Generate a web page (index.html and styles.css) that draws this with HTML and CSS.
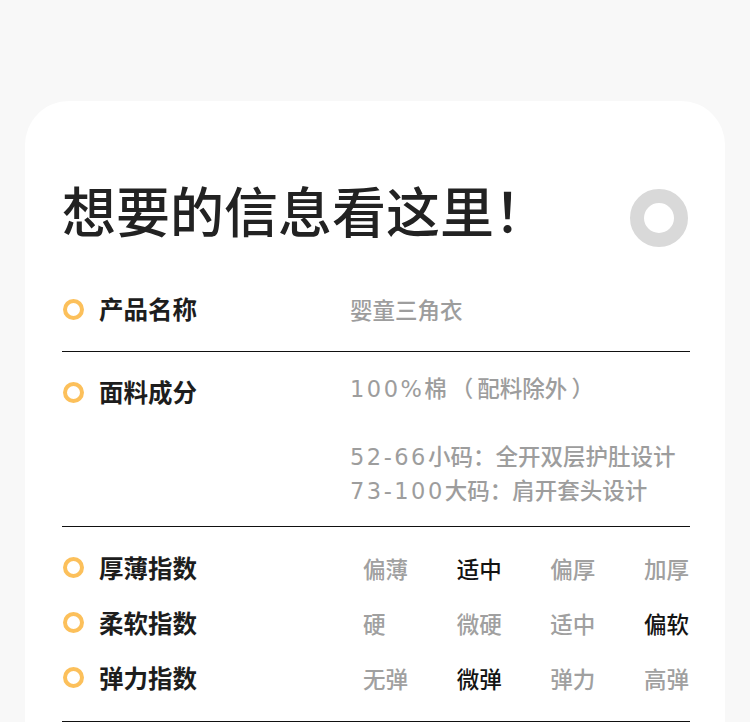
FILE: index.html
```html
<!DOCTYPE html>
<html lang="zh-CN">
<head>
<meta charset="utf-8">
<title>想要的信息看这里</title>
<link rel="stylesheet" href="styles.css">
</head>
<body>
<main class="page">
  <section class="card">
    <header class="card-head">
      <h1 class="title">想要的信息看这里！</h1>
      <span class="head-ring" aria-hidden="true"></span>
    </header>

    <div class="row row-first">
      <div class="label"><span class="dot"></span>产品名称</div>
      <div class="value">婴童三角衣</div>
    </div>

    <div class="row row-multi">
      <div class="label"><span class="dot"></span>面料成分</div>
      <div class="value">
        <p class="line"><span class="num">100%</span>棉<span class="paren">（</span>配料除外<span class="paren">）</span></p>
        <p class="line blank"></p>
        <p class="line"><span class="num">52-66</span>小码：全开双层护肚设计</p>
        <p class="line"><span class="num">73-100</span>大码：肩开套头设计</p>
      </div>
    </div>

    <div class="scales">
      <div class="scale-row">
        <div class="label"><span class="dot"></span>厚薄指数</div>
        <ul class="options">
          <li class="opt">偏薄</li>
          <li class="opt on">适中</li>
          <li class="opt">偏厚</li>
          <li class="opt">加厚</li>
        </ul>
      </div>
      <div class="scale-row">
        <div class="label"><span class="dot"></span>柔软指数</div>
        <ul class="options">
          <li class="opt">硬</li>
          <li class="opt">微硬</li>
          <li class="opt">适中</li>
          <li class="opt on">偏软</li>
        </ul>
      </div>
      <div class="scale-row">
        <div class="label"><span class="dot"></span>弹力指数</div>
        <ul class="options">
          <li class="opt">无弹</li>
          <li class="opt on">微弹</li>
          <li class="opt">弹力</li>
          <li class="opt">高弹</li>
        </ul>
      </div>
    </div>
  </section>
</main>
</body>
</html>
```

FILE: styles.css
```css
* {
  box-sizing: border-box;
}

html, body {
  margin: 0;
  padding: 0;
  background: #f8f8f8;
  font-family: "Noto Sans CJK SC", "Noto Sans", sans-serif;
  text-spacing-trim: space-all;
}

.page {
  padding: 101px 25px 0;
  height: 722px;
  overflow: hidden;
}

.card {
  background: #ffffff;
  border-radius: 44px 44px 0 0;
  padding: 77px 35px 0 37px;
  min-height: 700px;
}

.card-head {
  display: flex;
  align-items: flex-start;
  justify-content: space-between;
  height: 64px;
  margin-bottom: 27px;
}

.title {
  margin: 0;
  font-size: 54px;
  line-height: 64px;
  font-weight: 500;
  color: #222222;
  letter-spacing: 0;
}

.head-ring {
  width: 58px;
  height: 58px;
  margin-top: 11px;
  margin-right: 2px;
  border-radius: 50%;
  border: 14px solid #d9d9d9;
  flex: none;
}

.row {
  display: flex;
  align-items: center;
  padding: 18px 0 20px;
  border-bottom: 1px solid #111111;
}

.row-multi {
  align-items: flex-start;
}

.label {
  display: flex;
  align-items: center;
  width: 288px;
  flex: none;
  font-size: 24.5px;
  line-height: 44px;
  font-weight: 700;
  color: #1d1d1d;
}

.dot {
  width: 21px;
  height: 21px;
  margin: 0 15px 0 1px;
  border-radius: 50%;
  border: 4px solid #fcc05b;
  flex: none;
}

.value {
  font-size: 22.5px;
  line-height: 34px;
  font-weight: 500;
  color: #9d9d9d;
}

.line {
  margin: 0;
  height: 34px;
  white-space: nowrap;
}

.num {
  font-family: "DejaVu Sans", "Liberation Sans", sans-serif;
  font-weight: 400;
  letter-spacing: 2.5px;
  line-height: 1;
}

.paren {
  margin: 0 4px;
}

.scales {
  padding: 13px 0 16px;
  border-bottom: 1px solid #111111;
}

.scale-row {
  display: flex;
  align-items: center;
  height: 55px;
}

.options {
  list-style: none;
  margin: 0 0 0 13px;
  padding: 0;
  flex: 1;
  display: flex;
  justify-content: space-between;
}

.opt {
  width: 46px;
  font-size: 22.5px;
  line-height: 34px;
  font-weight: 500;
  color: #a0a0a0;
}

.opt.on {
  color: #141414;
}
```
